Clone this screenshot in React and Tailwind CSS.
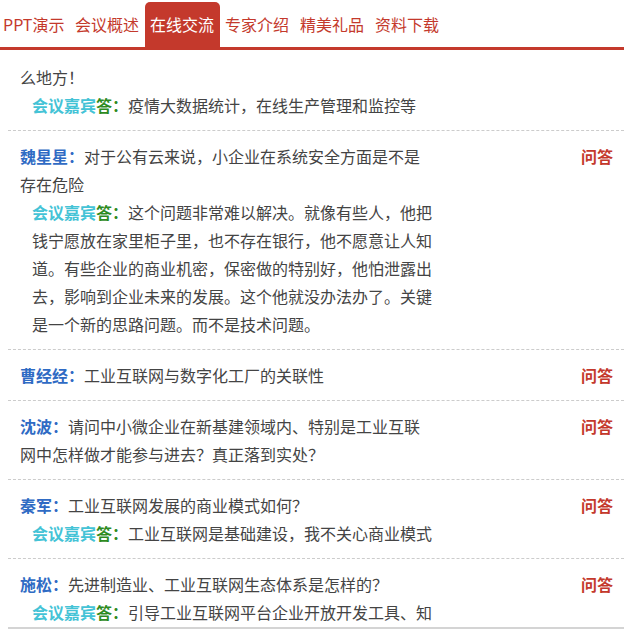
import React from 'react';

const TABS = ['PPT演示', '会议概述', '在线交流', '专家介绍', '精美礼品', '资料下载'];
const ACTIVE = 2;

const ITEMS = [
  {
    name: null,
    question: '么地方！',
    answer: '疫情大数据统计，在线生产管理和监控等',
    tag: false,
  },
  {
    name: '魏星星',
    question: '对于公有云来说，小企业在系统安全方面是不是存在危险',
    answer: '这个问题非常难以解决。就像有些人，他把钱宁愿放在家里柜子里，也不存在银行，他不愿意让人知道。有些企业的商业机密，保密做的特别好，他怕泄露出去，影响到企业未来的发展。这个他就没办法办了。关键是一个新的思路问题。而不是技术问题。',
    tag: true,
  },
  { name: '曹经经', question: '工业互联网与数字化工厂的关联性', answer: null, tag: true },
  {
    name: '沈波',
    question: '请问中小微企业在新基建领域内、特别是工业互联网中怎样做才能参与进去？真正落到实处？',
    answer: null,
    tag: true,
  },
  {
    name: '秦军',
    question: '工业互联网发展的商业模式如何？',
    answer: '工业互联网是基础建设，我不关心商业模式',
    tag: true,
  },
  {
    name: '施松',
    question: '先进制造业、工业互联网生态体系是怎样的？',
    answer: '引导工业互联网平台企业开放开发工具、知识组件、算法组件等，构建开放共享的开发环境',
    tag: true,
  },
];

const Row = ({ item, first }) => (
  <div
    className={
      'flex pl-3 pr-[11px] border-b border-dashed border-[#cccccc] ' +
      (first ? 'pt-[13px] pb-[11px]' : 'py-[11px]')
    }
  >
    <div className="shrink-0">
      <p className="w-[404px] text-[#444444]">
        {item.name && <span className="font-bold text-[#2f6bc4]">{item.name}：</span>}
        {item.question}
      </p>
      {item.answer && (
        <p className="ml-3 w-[404px] text-[#444444]">
          <span className="font-bold text-[#44c3d6]">会议嘉宾</span>
          <span className="font-bold text-[#2e8b1f]">答：</span>
          {item.answer}
        </p>
      )}
    </div>
    {item.tag && <span className="ml-auto font-bold text-[#c4392c]">问答</span>}
  </div>
);

const App = () => {
  return (
    <div
      className="h-[629px] flex flex-col bg-white text-[16px] leading-[28px] overflow-hidden"
      style={{ fontFamily: '"Microsoft YaHei", "Noto Sans CJK SC", "Noto Sans", sans-serif' }}
    >
      <nav className="flex items-end h-[50px] pl-[3px] border-b-[3px] border-[#c4392c] shrink-0">
        {TABS.map((t, i) => (
          <div
            key={t}
            className={
              (i === 0 ? 'w-[67px] ' : 'w-[75px] pl-[5px] ') +
              'h-[45px] leading-[45px] whitespace-nowrap ' +
              (i === ACTIVE ? 'bg-[#c4392c] text-white rounded-t-[5px]' : 'text-[#c4392c]')
            }
          >
            {t}
          </div>
        ))}
      </nav>
      <div className="flex-1 overflow-hidden ml-2 border-b-2 border-[#d4d4d4]">
        {ITEMS.map((item, i) => (
          <Row key={i} item={item} first={i === 0} />
        ))}
      </div>
    </div>
  );
};

export default App;
